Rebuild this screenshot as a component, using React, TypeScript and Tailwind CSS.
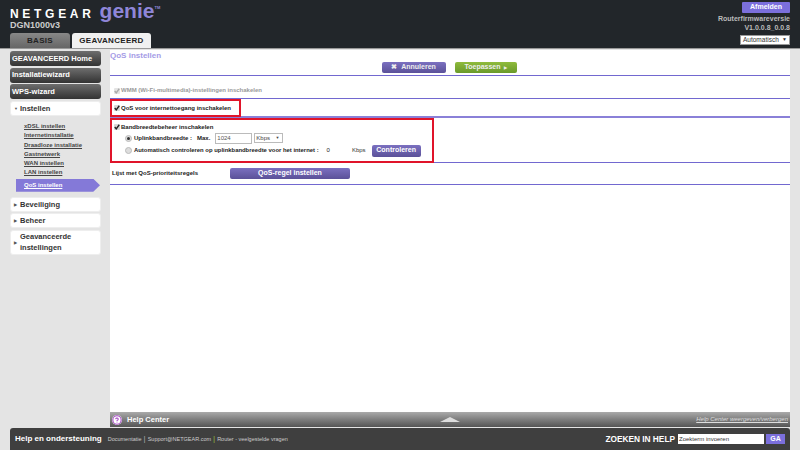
import React from 'react';
import { HelpCircle } from 'lucide-react';

const Check = ({ dim }: { dim?: boolean }) => (
  <span className={`w-[6px] h-[6px] mr-[1px] shrink-0 rounded-[1px] flex items-center justify-center ${dim ? 'bg-[#e4e4e4]' : 'bg-[#d8d8d8]'}`}>
    <svg viewBox="0 0 8 8" className="w-[6px] h-[6px]">
      <path d="M1 4l2 2.5L7 1" fill="none" stroke={dim ? '#aaa' : '#222'} strokeWidth="1.8" />
    </svg>
  </span>
);

const Radio = ({ on }: { on?: boolean }) => (
  <span className="w-[7px] h-[7px] rounded-full bg-[#ddd] border border-[#bbb] mr-[2px] shrink-0 flex items-center justify-center">
    {on && <span className="w-[3px] h-[3px] rounded-full bg-[#333]" />}
  </span>
);

const NavDark = ({ label }: { label: string }) => (
  <div className="h-[15px] mb-[1.5px] rounded-[3px] bg-gradient-to-b from-[#6e6e6e] to-[#333] text-white text-[7.5px] font-bold px-[2px] flex items-center whitespace-nowrap">
    {label}
  </div>
);

const NavLight = ({ label, open }: { label: React.ReactNode; open?: boolean }) => (
  <div className="min-h-[15px] mb-[1.5px] rounded-[3px] bg-white border border-[#eee] text-[#333] text-[7.5px] font-bold leading-[11px] pl-[3px] py-[0.5px] flex items-center gap-[1px]">
    <span className="text-[4px] text-[#555] w-[5px] shrink-0">{open ? '▼' : '▶'}</span>
    <span>{label}</span>
  </div>
);

const subLinks = ['xDSL instellen', 'Internetinstallatie', 'Draadloze installatie', 'Gastnetwerk', 'WAN instellen', 'LAN instellen'];

export default function App() {
  return (
    <div className="w-[800px] h-[450px] overflow-hidden bg-[#e4e4e4] flex flex-col font-['Liberation_Sans',Arial,sans-serif]">
      {/* header */}
      <header className="h-[49px] shrink-0 bg-[#22262a] flex justify-between px-[10px] border-b-[1px] border-[#999]">
        <div className="flex flex-col">
          <div className="flex items-baseline h-[21px]">
            <span className="text-white text-[12px] font-bold tracking-[3.7px] leading-[21px]">NETGEAR</span>
            <span className="text-[#8f86d8] text-[21px] font-bold leading-[21px] ml-[5px]">genie</span>
            <span className="text-[#8f86d8] text-[4px] font-bold self-start leading-[16px]">TM</span>
          </div>
          <div className="text-[#ccc] text-[9px] font-bold leading-[9px]">DGN1000v3</div>
          <div className="flex mt-[3px] gap-[2px]">
            <div className="w-[60px] h-[15px] rounded-t-[3px] bg-gradient-to-b from-[#888] to-[#666] text-[#222] text-[8px] font-bold flex items-center justify-center tracking-[0.3px]">BASIS</div>
            <div className="w-[79px] h-[15px] rounded-t-[3px] bg-[#f0f0f0] text-[#222] text-[8px] font-bold flex items-center justify-center tracking-[0.3px]">GEAVANCEERD</div>
          </div>
        </div>
        <div className="flex flex-col items-end pt-[2px]">
          <div className="w-[48px] h-[11px] rounded-[1px] bg-[#7b6fdc] text-white text-[7px] font-bold flex items-center justify-center">Afmelden</div>
          <div className="text-[#bbb] text-[7px] font-bold leading-[9px] mt-[1px] text-right">Routerfirmwareversie<br />V1.0.0.8_0.0.8</div>
          <div className="w-[50px] h-[10px] mt-[3px] bg-white border border-[#999] text-[#333] text-[6.5px] flex items-center justify-between px-[2px]">
            <span>Automatisch</span><span className="text-[5px]">▼</span>
          </div>
        </div>
      </header>

      <div className="flex-1 flex min-h-0 pt-[1px] pr-[10px]">
        {/* sidebar */}
        <aside className="w-[110px] shrink-0 pl-[10px] pr-[9px] pt-[1px]">
          <NavDark label="GEAVANCEERD Home" />
          <NavDark label="Installatiewizard" />
          <NavDark label="WPS-wizard" />
          <NavLight label="Instellen" open />
          <div className="pt-[5px] pb-[5px]">
            {subLinks.map((l) => (
              <div key={l} className="pl-[14px] h-[9.3px] leading-[9.3px] text-[6px] font-bold text-[#444] underline whitespace-nowrap">{l}</div>
            ))}
            <div className="mt-[1px] ml-[6px] w-[84px] h-[13px] bg-[#8479d8] text-white text-[6px] font-bold underline pl-[8px] flex items-center [clip-path:polygon(0_0,92%_0,100%_50%,92%_100%,0_100%)]">QoS instellen</div>
          </div>
          <NavLight label="Beveiliging" />
          <NavLight label="Beheer" />
          <NavLight label={<>Geavanceerde<br />instellingen</>} />
        </aside>

        {/* content */}
        <main className="flex-1 flex flex-col min-w-0">
          <div className="flex-1 bg-white text-[6px] font-bold text-[#222]">
            <div className="h-[26px] border-b border-[#7268d0]">
              <div className="text-[#a49be6] text-[8px] leading-[10px] pt-[1px]">QoS instellen</div>
              <div className="flex justify-center gap-[9px] mr-[2px] mt-[1px]">
                <div className="w-[64px] h-[11px] rounded-[2px] bg-gradient-to-b from-[#7b70c0] to-[#5b5199] text-[#eee] text-[7px] flex items-center justify-center gap-[4px]"><span>✖</span><span>Annuleren</span></div>
                <div className="w-[62px] h-[11px] rounded-[2px] bg-gradient-to-b from-[#8fbb3c] to-[#6a9a2a] text-[#eee] text-[7px] flex items-center justify-center gap-[3px]"><span>Toepassen</span><span className="text-[4px]">▶</span></div>
              </div>
            </div>
            <div className="h-[23px] border-b border-[#7268d0] flex items-end pb-[3px] pl-[4px] text-[#999]">
              <span className="flex items-center"><Check dim />WMM (Wi-Fi-multimedia)-instellingen inschakelen</span>
            </div>
            <div className="h-[19px] border-b-2 border-[#8a80d8]">
              <div className="w-[131px] h-[18px] border-2 border-[#e0142a] flex items-center pl-[2px] whitespace-nowrap">
                <Check />QoS voor internettoegang inschakelen
              </div>
            </div>
            <div className="h-[45px] border-b border-[#7268d0]">
              <div className="w-[324px] h-[45px] border-2 border-[#e0142a] pl-[2px] pt-[2px] whitespace-nowrap">
                <div className="flex items-center h-[10px]"><Check />Bandbreedtebeheer inschakelen</div>
                <div className="flex items-center h-[12px] pl-[11px]">
                  <Radio on />Uplinkbandbreedte :
                  <span className="ml-[5px]">Max.</span>
                  <span className="ml-[5px] w-[37px] h-[11px] border border-[#bbb] font-normal text-[#555] flex items-center pl-[1px]">1024</span>
                  <span className="ml-[2px] w-[29px] h-[10px] border border-[#bbb] font-normal text-[#444] flex items-center justify-between px-[1px]">Kbps<span className="text-[4px] pr-[2px]">▼</span></span>
                </div>
                <div className="flex items-center h-[13px] pl-[11px]">
                  <Radio /><span className="text-[5.9px]">Automatisch controleren op uplinkbandbreedte voor het internet :</span>
                  <span className="ml-[8px] font-normal">0</span>
                  <span className="ml-[22px] font-normal text-[#333]">Kbps</span>
                  <span className="ml-[6px] w-[49px] h-[12px] rounded-[2px] bg-gradient-to-b from-[#7b70c0] to-[#5b5199] text-white text-[7px] flex items-center justify-center">Controleren</span>
                </div>
              </div>
            </div>
            <div className="h-[22px] border-b border-[#7268d0] flex items-center pl-[2px]">
              <span className="w-[118px]">Lijst met QoS-prioriteitsregels</span>
              <span className="w-[120px] h-[11px] rounded-[2px] bg-gradient-to-b from-[#7b70c0] to-[#5b5199] text-white text-[7px] flex items-center justify-center">QoS-regel instellen</span>
            </div>
          </div>
          {/* help center bar */}
          <div className="h-[15px] shrink-0 bg-gradient-to-b from-[#aaa] to-[#555] grid grid-cols-3 items-center px-[2px]">
            <div className="flex items-center gap-[5px] text-white text-[7.5px] font-bold">
              <span className="w-[10px] h-[10px] rounded-full bg-white flex items-center justify-center">
                <HelpCircle className="w-[10px] h-[10px] text-[#a040c0]" strokeWidth={2.5} />
              </span>
              Help Center
            </div>
            <div className="justify-self-center w-0 h-0 border-l-[10px] border-r-[10px] border-b-[5px] border-l-transparent border-r-transparent border-b-[#ddd]" />
            <span className="justify-self-end text-[#ddd] text-[6px] italic underline whitespace-nowrap">Help Center weergeven/verbergen</span>
          </div>
        </main>
      </div>

      {/* footer */}
      <footer className="h-[22px] shrink-0 mx-[10px] mt-[1px] rounded-t-[3px] bg-[#3f3f3f] flex items-center justify-between px-[5px]">
        <div className="flex items-center text-[#ccc] text-[5.5px]">
          <span className="text-white text-[8px] font-bold mr-[6px]">Help en ondersteuning</span>
          <span>Documentatie</span>
          <span className="mx-[2px] text-[#aaa] text-[8px]">|</span>
          <span>Support@NETGEAR.com</span>
          <span className="mx-[2px] text-[#8fbb3c] text-[8px]">|</span>
          <span>Router - veelgestelde vragen</span>
        </div>
        <div className="flex items-center">
          <span className="text-white text-[8.3px] font-bold mr-[3px]">ZOEKEN IN HELP</span>
          <span className="w-[86px] h-[10px] bg-white text-[#333] text-[6px] flex items-center pl-[1px]">Zoekterm invoeren</span>
          <span className="ml-[2px] w-[19px] h-[10px] bg-[#7b6fdc] text-white text-[7px] font-bold flex items-center justify-center">GA</span>
        </div>
      </footer>
    </div>
  );
}
